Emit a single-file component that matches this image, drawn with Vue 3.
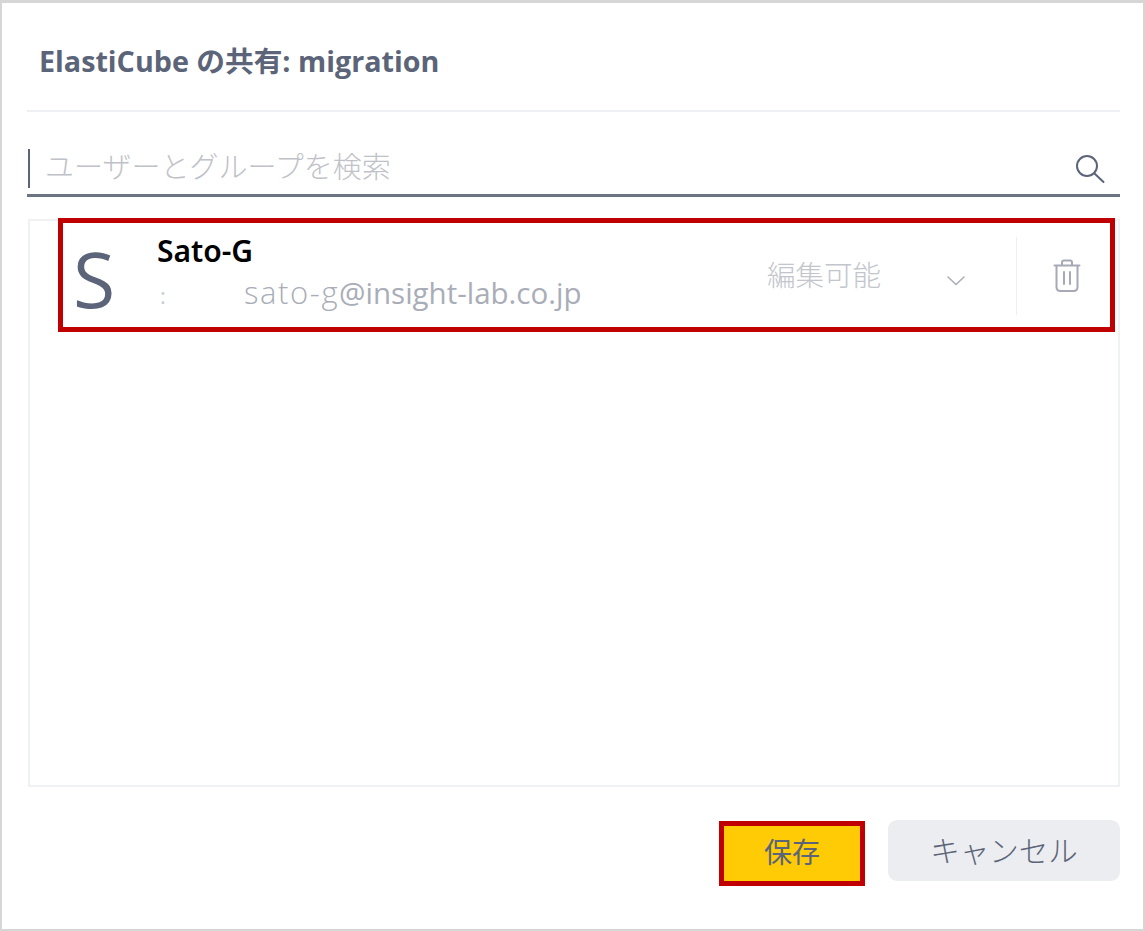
<template>
  <div class="frame">
    <h1 class="title">ElastiCube の共有: migration</h1>
    <div class="search">
      <span class="caret"></span>
      <span class="placeholder">ユーザーとグループを検索</span>
      <svg class="search-icon" width="30" height="30" viewBox="0 0 30 30" fill="none" stroke="#5b6478" stroke-width="2" stroke-linecap="round">
        <circle cx="12" cy="12" r="10" />
        <path d="M19.5 19.5 L28.5 28" />
      </svg>
    </div>
    <div class="list">
      <div class="row">
        <div class="avatar">S</div>
        <div class="info">
          <div class="name">Sato-G</div>
          <div class="email"><span class="masked">:</span><span class="user">sato-g</span><span>@insight-lab.co.jp</span></div>
        </div>
        <div class="role">編集可能</div>
        <svg class="chevron" width="20" height="12" viewBox="0 0 20 12" fill="none" stroke="#a9aeb9" stroke-width="1.6" stroke-linecap="round">
          <path d="M2 2 L10 9.5 L18 2" />
        </svg>
        <div class="sep"></div>
        <svg class="trash" width="28" height="34" viewBox="0 0 28 34" fill="none" stroke="#a5aab6" stroke-width="2" stroke-linejoin="round" stroke-linecap="round">
          <path d="M1.5 6.5 H26.5" />
          <path d="M9 6 V3.5 Q9 1.5 11 1.5 H17 Q19 1.5 19 3.5 V6" />
          <path d="M3.5 7 V28 Q3.5 32 7.5 32 H20.5 Q24.5 32 24.5 28 V7" />
          <path d="M11 13 V25 M17 13 V25" />
        </svg>
      </div>
    </div>
    <div class="actions">
      <button class="btn save"><span class="save-label">保存</span></button>
      <button class="btn cancel">キャンセル</button>
    </div>
  </div>
</template>

<script setup>
</script>

<style>
html, body { margin: 0; background: #fff; }
</style>

<style scoped>
.frame {
  box-sizing: border-box;
  width: 1145px;
  height: 931px;
  border: 2px solid #d6d6d6;
  border-top-width: 3px;
  padding: 0 23px 0 25px;
  background: #fff;
  font-family: "Open Sans", "Noto Sans CJK JP", sans-serif;
  color: #5b6478;
  display: flex;
  flex-direction: column;
  overflow: hidden;
}
.title {
  margin: 0;
  padding: 39px 0 0 12px;
  box-sizing: border-box;
  border-bottom: 2px solid #eeeff2;
  font-size: 28.7px;
  line-height: 38px;
  font-weight: 700;
  color: #5b6478;
  white-space: nowrap;
  height: 109px;
}
.search {
  margin-top: 36px;
  height: 46px;
  border-bottom: 3px solid #6c7484;
  display: flex;
  align-items: flex-start;
  position: relative;
}
.caret {
  width: 2px;
  height: 39px;
  margin: 1px 0 0 1px;
  background: #5b6478;
}
.placeholder {
  margin-left: 15px;
  font-size: 29px;
  line-height: 38px;
  color: #bfc2c8;
  font-weight: 300;
  white-space: nowrap;
}
.search-icon {
  margin: 6px 15px 0 auto;
}
.list {
  box-sizing: border-box;
  margin: 22px 0 0 1px;
  height: 568px;
  border: 2px solid #f0f1f4;
}
.row {
  box-sizing: border-box;
  height: 114px;
  margin: -3px 3px 0 28px;
  border: 5px solid #c00000;
  display: flex;
  align-items: flex-start;
  background: #fff;
}
.avatar {
  width: 94px;
  padding-left: 10px;
  box-sizing: border-box;
  font-size: 77px;
  line-height: 80px;
  margin-top: 16px;
  font-weight: 400;
  color: #5b6478;
}
.info {
  width: 610px;
  flex: none;
}
.name {
  margin-top: 12px;
  font-family: "Noto Sans", sans-serif;
  font-size: 30px;
  line-height: 32px;
  font-weight: 600;
  color: #000;
}
.email {
  margin-top: 5px;
  font-size: 29.5px;
  line-height: 40px;
  font-weight: 400;
  color: #a9adb8;
  white-space: nowrap;
  display: flex;
  align-items: baseline;
}
.user {
  font-size: 31px;
  font-weight: 300;
  letter-spacing: 1.6px;
}
.masked {
  width: 87px;
  padding-left: 3px;
  box-sizing: border-box;
  font-size: 22px;
  color: #c9ccd3;
}
.role {
  width: 180px;
  flex: none;
  margin-top: 32px;
  font-size: 28.5px;
  line-height: 40px;
  font-weight: 300;
  color: #c2c5cc;
  white-space: nowrap;
}
.chevron {
  margin-top: 52px;
  margin-left: -1px;
}
.sep {
  width: 1px;
  height: 78px;
  margin: 14px 0 0 50px;
  background: #eceef1;
}
.trash {
  margin: 36px 0 0 36px;
}
.actions {
  margin-top: 33px;
  display: flex;
  align-items: flex-start;
  justify-content: flex-end;
}
.btn {
  font-family: inherit;
  font-size: 28px;
  line-height: 40px;
  color: #5b6478;
  border: 0;
  padding: 0;
  font-weight: 400;
}
.save {
  box-sizing: border-box;
  width: 146px;
  height: 65px;
  margin-top: 1px;
  border: 5px solid #c00000;
  background: #ffcb05;
}
.save-label {
  display: block;
  margin-top: -4px;
}
.cancel {
  width: 232px;
  height: 61px;
  margin-left: 23px;
  border-radius: 9px;
  background: #ecedf1;
  font-size: 29.5px;
  font-weight: 300;
}
</style>
